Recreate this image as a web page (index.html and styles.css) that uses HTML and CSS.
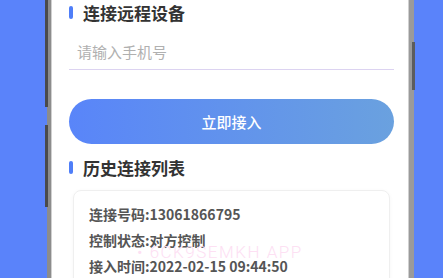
FILE: index.html
```html
<!DOCTYPE html>
<html>
<head>
    <meta charset="utf-8">
    <title>连接远程设备</title>
    <meta name="viewport" content="width=device-width, initial-scale=1.0">
    <link rel="stylesheet" href="styles.css">
</head>
<body>
    <div class="phone">
        <!-- side keys of the phone -->
        <span class="key key-left-1"></span>
        <span class="key key-left-2"></span>
        <span class="key key-right"></span>

        <div class="screen">
            <div class="title">连接远程设备</div>
            <div class="field">
                <input type="text" placeholder="请输入手机号">
            </div>
            <button type="button">立即接入</button>

            <div class="title title-history">历史连接列表</div>
            <div class="card">
                <div class="row">连接号码:13061866795</div>
                <div class="row">控制状态:对方控制</div>
                <div class="row">接入时间:2022-02-15 09:44:50</div>
                <div class="watermark">• 6CK9SEMKH APP</div>
            </div>
        </div>
    </div>
</body>
</html>
```

FILE: styles.css
```css
body {
    margin: 0;
    background-color: #5a83fa;
    font-family: "Noto Sans CJK SC", "Noto Sans", sans-serif;
    height: 278px;
    overflow: hidden;
}

.phone {
    position: relative;
    margin-left: 47px;
    width: 358px;
    height: 278px;
    background-color: white;
    border-left: 4px solid #8c8c8c;
    border-right: 5px solid #9a9a9a;
    box-shadow: inset 1px 0 0 #d0d0d0, inset -1px 0 0 #d0d0d0;
}

.key {
    position: absolute;
    width: 3px;
    background-color: #4a4a4a;
}

.key-left-1 {
    left: -6px;
    top: 0;
    height: 107px;
}

.key-left-2 {
    left: -6px;
    top: 125px;
    height: 82px;
}

.key-right {
    right: -6px;
    top: 42px;
    height: 48px;
    background-color: #5c5c5c;
}

.screen {
    padding: 0 15px 0 18px;
}

.title {
    display: flex;
    align-items: center;
    height: 24px;
    font-size: 17px;
    font-weight: bold;
    color: #333;
}

.title::before {
    content: "";
    width: 4px;
    height: 13px;
    margin-right: 10px;
    border-radius: 2px;
    background-color: #4f7ef8;
}

.title-history {
    margin-top: 11px;
}

.field {
    margin-top: 12px;
    border-bottom: 1px solid #dcd3f1;
}

.field input {
    width: 100%;
    height: 33px;
    padding: 0 8px 2px;
    border: none;
    outline: none;
    font-family: inherit;
    font-size: 15px;
    color: #333;
    box-sizing: border-box;
}

.field input::placeholder {
    color: #b0b0b0;
}

button {
    display: block;
    width: 100%;
    height: 45px;
    margin-top: 29px;
    border: none;
    border-radius: 23px;
    background: linear-gradient(90deg, #5985f9, #6aa1df);
    color: white;
    font-family: inherit;
    font-size: 15px;
    font-weight: 500;
    cursor: pointer;
}

.card {
    position: relative;
    margin: 11px 4px 0;
    padding: 10px 15px;
    border: 1px solid #efefef;
    border-radius: 8px;
    box-shadow: 0 1px 4px rgba(0, 0, 0, 0.04);
}

.row {
    line-height: 26px;
    font-size: 14px;
    font-weight: 600;
    color: #555;
}

.watermark {
    position: absolute;
    left: 63px;
    top: 51px;
    font-family: Roboto, sans-serif;
    font-size: 17px;
    font-weight: 300;
    letter-spacing: 1.5px;
    color: #fde0f3;
    white-space: nowrap;
}
```
